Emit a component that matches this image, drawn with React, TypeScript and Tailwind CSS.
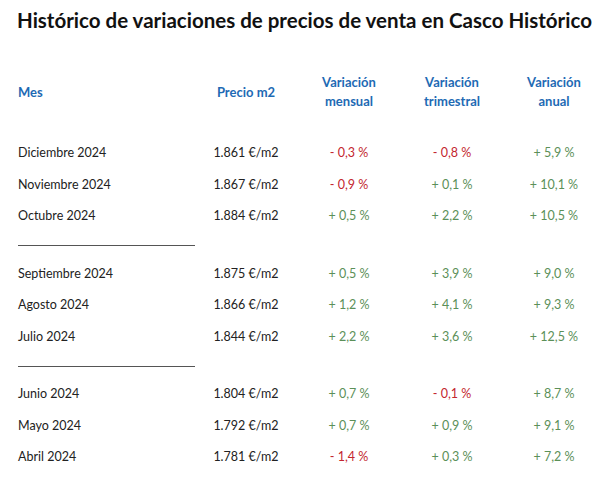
import * as React from "react"

type Row = {
  mes: string
  precio: string
  mensual: string
  trimestral: string
  anual: string
}

const sections: Row[][] = [
  [
    { mes: "Diciembre 2024", precio: "1.861 €/m2", mensual: "- 0,3 %", trimestral: "- 0,8 %", anual: "+ 5,9 %" },
    { mes: "Noviembre 2024", precio: "1.867 €/m2", mensual: "- 0,9 %", trimestral: "+ 0,1 %", anual: "+ 10,1 %" },
    { mes: "Octubre 2024", precio: "1.884 €/m2", mensual: "+ 0,5 %", trimestral: "+ 2,2 %", anual: "+ 10,5 %" },
  ],
  [
    { mes: "Septiembre 2024", precio: "1.875 €/m2", mensual: "+ 0,5 %", trimestral: "+ 3,9 %", anual: "+ 9,0 %" },
    { mes: "Agosto 2024", precio: "1.866 €/m2", mensual: "+ 1,2 %", trimestral: "+ 4,1 %", anual: "+ 9,3 %" },
    { mes: "Julio 2024", precio: "1.844 €/m2", mensual: "+ 2,2 %", trimestral: "+ 3,6 %", anual: "+ 12,5 %" },
  ],
  [
    { mes: "Junio 2024", precio: "1.804 €/m2", mensual: "+ 0,7 %", trimestral: "- 0,1 %", anual: "+ 8,7 %" },
    { mes: "Mayo 2024", precio: "1.792 €/m2", mensual: "+ 0,7 %", trimestral: "+ 0,9 %", anual: "+ 9,1 %" },
    { mes: "Abril 2024", precio: "1.781 €/m2", mensual: "- 1,4 %", trimestral: "+ 0,3 %", anual: "+ 7,2 %" },
  ],
]

const cols = "grid grid-cols-[182px_92px_114px_92px_112px]"

function Change({ value }: { value: string }) {
  const down = value.startsWith("-")
  return (
    <span className={down ? "text-[#c3262f]" : "text-[#5b9058]"}>{value}</span>
  )
}

export default function App() {
  return (
    <div className="w-[610px] h-[484px] bg-white text-[#222] font-['Lato',sans-serif] overflow-hidden">
      <h1 className="pl-[17px] pt-[8px] text-[20.5px] leading-[24px] font-bold text-[#111] whitespace-nowrap">
        Histórico de variaciones de precios de venta en Casco Histórico
      </h1>

      {/* header */}
      <div className={cn(cols, "pl-[18px] mt-[41px] h-[38px] items-center text-[13px] leading-[19px] font-bold text-[#1e6ab4]")}>
        <div>Mes</div>
        <div className="text-center">Precio m2</div>
        <div className="text-center">Variación<br />mensual</div>
        <div className="text-center">Variación<br />trimestral</div>
        <div className="text-center">Variación<br />anual</div>
      </div>

      <div className="mt-[27px]">
        {sections.map((rows, i) => (
          <div key={i}>
            {i > 0 && (
              <div className="h-[26px] flex items-center pl-[18px]">
                <div className="w-[177px] h-px bg-[#555]" />
              </div>
            )}
            {rows.map((r) => (
              <div key={r.mes} className={cn(cols, "pl-[18px] h-[31.5px] items-center text-[12.5px]")}>
                <div>{r.mes}</div>
                <div className="text-center">{r.precio}</div>
                <div className="text-center"><Change value={r.mensual} /></div>
                <div className="text-center"><Change value={r.trimestral} /></div>
                <div className="text-center"><Change value={r.anual} /></div>
              </div>
            ))}
          </div>
        ))}
      </div>
    </div>
  )
}

function cn(...c: string[]) {
  return c.join(" ")
}
